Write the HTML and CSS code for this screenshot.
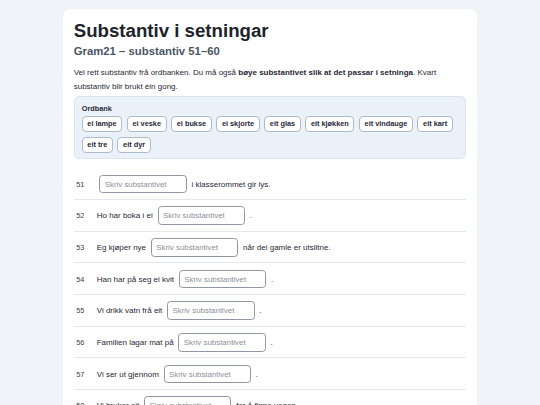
FILE: index.html
```html
<!DOCTYPE html>
<html>
  <head>
    <title>Substantiv i setningar</title>
    <link rel="stylesheet" href="styles.css">
  </head>
  <body>
    <div class="card">
      <h1>Substantiv i setningar</h1>
      <h2>Gram21 – substantiv 51–60</h2>
      <p class="intro">
        Vel rett substantiv frå ordbanken. Du må også
        <b>bøye substantivet slik at det passar i setninga</b>. Kvart
        substantiv blir brukt éin gong.
      </p>

      <div class="bank">
        <div class="bank-title">Ordbank</div>
        <div class="chips">
          <span class="chip">ei lampe</span>
          <span class="chip">ei veske</span>
          <span class="chip">ei bukse</span>
          <span class="chip">ei skjorte</span>
          <span class="chip">eit glas</span>
          <span class="chip">eit kjøkken</span>
          <span class="chip">eit vindauge</span>
          <span class="chip">eit kart</span>
          <span class="chip">eit tre</span>
          <span class="chip">eit dyr</span>
        </div>
      </div>

      <ol class="tasks">
        <li class="task">
          <span class="num">51</span>
          <input type="text" placeholder="Skriv substantivet">
          <span>i klasserommet gir lys.</span>
        </li>
        <li class="task">
          <span class="num">52</span>
          <span>Ho har boka i ei</span>
          <input type="text" placeholder="Skriv substantivet">
          <span>.</span>
        </li>
        <li class="task">
          <span class="num">53</span>
          <span>Eg kjøper nye</span>
          <input type="text" placeholder="Skriv substantivet">
          <span>når dei gamle er utslitne.</span>
        </li>
        <li class="task">
          <span class="num">54</span>
          <span>Han har på seg ei kvit</span>
          <input type="text" placeholder="Skriv substantivet">
          <span>.</span>
        </li>
        <li class="task">
          <span class="num">55</span>
          <span>Vi drikk vatn frå eit</span>
          <input type="text" placeholder="Skriv substantivet">
          <span>.</span>
        </li>
        <li class="task">
          <span class="num">56</span>
          <span>Familien lagar mat på</span>
          <input type="text" placeholder="Skriv substantivet">
          <span>.</span>
        </li>
        <li class="task">
          <span class="num">57</span>
          <span>Vi ser ut gjennom</span>
          <input type="text" placeholder="Skriv substantivet">
          <span>.</span>
        </li>
        <li class="task">
          <span class="num">58</span>
          <span>Vi bruker eit</span>
          <input type="text" placeholder="Skriv substantivet">
          <span>for å finne vegen.</span>
        </li>
        <li class="task">
          <span class="num">59</span>
          <span>Eit stort</span>
          <input type="text" placeholder="Skriv substantivet">
          <span>står i hagen.</span>
        </li>
        <li class="task">
          <span class="num">60</span>
          <span>Katta er eit</span>
          <input type="text" placeholder="Skriv substantivet">
          <span>.</span>
        </li>
      </ol>
    </div>
  </body>
</html>
```

FILE: styles.css
```css
body {
  margin: 0;
  padding: 9px 0;
  background: #f0f4f8;
  font-family: "Liberation Sans", Arial, sans-serif;
  color: #1f2937;
}
.card {
  width: 392.6px;
  margin: 0 auto;
  padding: 10.7px 10.7px 20px;
  background: white;
  border-radius: 8px;
}
h1 {
  margin: 0;
  font-size: 18.67px;
  line-height: 22.4px;
  color: #1e232b;
}
h2 {
  margin: 3.4px 0 0;
  font-size: 11.33px;
  line-height: 13.6px;
  color: #4b5563;
}
.intro {
  margin: 7px 0 0;
  font-size: 8px;
  line-height: 14px;
  color: #1f2937;
}
.bank {
  margin-top: 2.3px;
  padding: 6px 7px 4.5px;
  background: #eaf1f9;
  border: 1px solid #d9e4ef;
  border-radius: 5px;
}
.bank-title {
  font-size: 7.33px;
  font-weight: bold;
  line-height: 11px;
}
.chips {
  display: flex;
  flex-wrap: wrap;
  gap: 5px 4.5px;
  margin-top: 2px;
}
.chip {
  padding: 2px 4.65px;
  font-size: 7.33px;
  font-weight: bold;
  line-height: 10px;
  background: white;
  border: 1px solid #aebbc9;
  border-radius: 4px;
}
.tasks {
  list-style: none;
  margin: 9.5px 0 0;
  padding: 0;
}
.task {
  display: flex;
  align-items: center;
  gap: 2.2px;
  padding: 6.3px 0 5.7px;
  font-size: 8px;
  border-bottom: 1px solid #e5e7eb;
}
.num {
  box-sizing: border-box;
  width: 20.8px;
  padding-left: 2.5px;
  font-size: 7.33px;
  color: #374151;
}
.task input {
  box-sizing: border-box;
  width: 87.4px;
  height: 18.7px;
  margin: 0 2.6px;
  padding: 0 4.4px;
  font-family: inherit;
  font-size: 7.9px;
  color: #1f2937;
  border: 1px solid #8e97a3;
  border-radius: 3.5px;
}
.task input::placeholder {
  color: #8b9099;
}
```
